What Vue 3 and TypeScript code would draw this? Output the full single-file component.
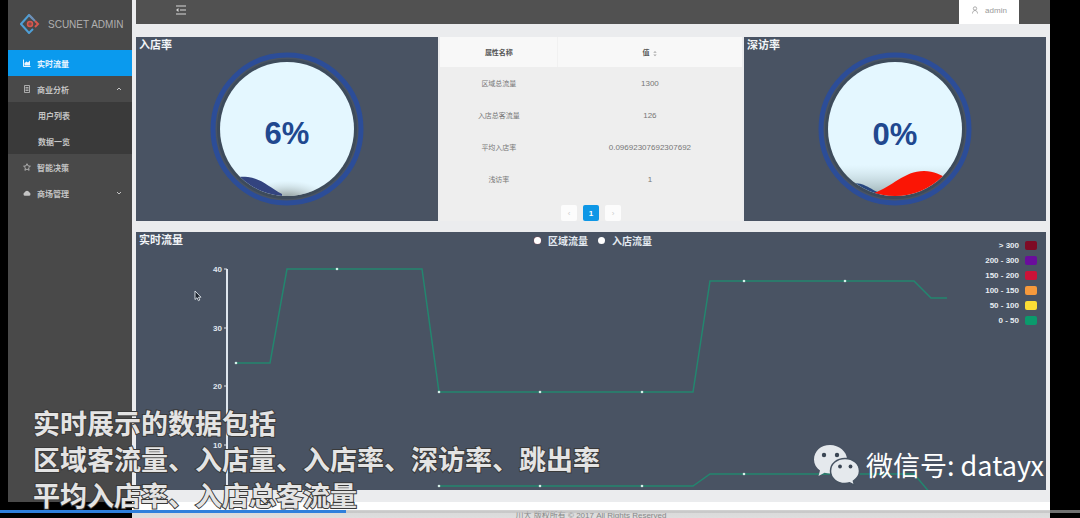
<script setup lang="ts">
import { computed, ref } from 'vue'

interface Point { x: number; y: number }
interface Row { name: string; value: string }

const rows: Row[] = [
  { name: '区域总流量', value: '1300' },
  { name: '入店总客流量', value: '126' },
  { name: '平均入店率', value: '0.09692307692307692' },
  { name: '浅访率', value: '1' },
]

const series = ref(['区域流量', '入店流量'])

const ranges = [
  { label: '> 300', color: '#7e0b25' },
  { label: '200 - 300', color: '#6a0d9c' },
  { label: '150 - 200', color: '#cc1238' },
  { label: '100 - 150', color: '#f6993c' },
  { label: '50 - 100', color: '#fbdd35' },
  { label: '0 - 50', color: '#0b9a6c' },
]

const ticks = [
  { label: '40', y: 37 },
  { label: '30', y: 96 },
  { label: '20', y: 154 },
  { label: '10', y: 213 },
]

const areaLine: Point[] = [
  { x: 100, y: 131 }, { x: 134, y: 131 }, { x: 151, y: 37 }, { x: 286, y: 37 },
  { x: 303, y: 160 }, { x: 557, y: 160 }, { x: 574, y: 49 }, { x: 778, y: 49 },
  { x: 795, y: 66 }, { x: 811, y: 66 },
]
const storeLine: Point[] = [
  { x: 303, y: 254 }, { x: 557, y: 254 }, { x: 574, y: 242 },
  { x: 778, y: 242 }, { x: 795, y: 262 },
]
const dots: Point[] = [
  { x: 100, y: 131 }, { x: 201, y: 37 }, { x: 303, y: 160 }, { x: 404, y: 160 },
  { x: 506, y: 160 }, { x: 608, y: 49 }, { x: 709, y: 49 },
  { x: 303, y: 254 }, { x: 404, y: 254 }, { x: 506, y: 254 }, { x: 608, y: 242 }, { x: 709, y: 242 },
]
const toPoints = (line: Point[]) => line.map((p) => `${p.x},${p.y}`).join(' ')
const areaPoints = computed(() => toPoints(areaLine))
const storePoints = computed(() => toPoints(storeLine))

const captions = [
  '实时展示的数据包括',
  '区域客流量、入店量、入店率、深访率、跳出率',
  '平均入店率、入店总客流量',
]
</script>

<template>
  <div class="screen">
    <div class="layout">
      <aside class="sidebar">
        <div class="brand">
          <svg class="brand-logo" viewBox="0 0 20 20" aria-hidden="true">
            <path d="M13 5 9 1 1 10l8 9 4-4" fill="none" stroke="#4f9fd6" stroke-width="2" />
            <path d="M9 1l6 6" fill="none" stroke="#6f8fb5" stroke-width="2" />
            <path d="M15 7l3 3-3 3" fill="none" stroke="#d8584f" stroke-width="2" />
            <circle cx="10" cy="10" r="2.5" fill="#8a4a48" stroke="#d8584f" stroke-width="1.500" />
          </svg>
          <span>SCUNET ADMIN</span>
        </div>
        <nav class="menu">
          <a class="item active" href="#live">
            <svg class="icon" viewBox="0 0 8 8"><path d="M.5.5v7h7" fill="none" stroke="currentColor" /><path d="M1.5 6.500V4l2-1.500 1.500 1 2-2v5z" fill="currentColor" /></svg>
            <span>实时流量</span>
          </a>
          <a class="item" href="#business">
            <svg class="icon" viewBox="0 0 8 8"><path d="M1.500.5h5v7h-5zM2.500 2.500h3M2.500 4h3M2.500 5.500h3" fill="none" stroke="currentColor" stroke-width=".8" /></svg>
            <span>商业分析</span>
            <svg class="arrow" viewBox="0 0 6 6"><path d="M1 4l2-2 2 2" fill="none" stroke="currentColor" /></svg>
          </a>
          <div class="submenu">
            <a class="item" href="#users">用户列表</a>
            <a class="item" href="#data">数据一览</a>
          </div>
          <a class="item" href="#decision">
            <svg class="icon" viewBox="0 0 8 8"><path d="M4 .7l1 2.200 2.400.3-1.800 1.600.5 2.500L4 6.100 1.900 7.300l.5-2.500L.6 3.200 3 2.900z" fill="none" stroke="currentColor" stroke-width=".8" /></svg>
            <span>智能决策</span>
          </a>
          <a class="item" href="#mall">
            <svg class="icon" viewBox="0 0 8 8"><path d="M2 6.800a1.800 1.800 0 0 1-.2-3.500 2.300 2.300 0 0 1 4.400 0A1.800 1.800 0 0 1 6 6.800z" fill="currentColor" /></svg>
            <span>商场管理</span>
            <svg class="arrow" viewBox="0 0 6 6"><path d="M1 2l2 2 2-2" fill="none" stroke="currentColor" /></svg>
          </a>
        </nav>
      </aside>

      <div class="main">
        <header class="topbar">
          <button class="fold" type="button" aria-label="收起菜单">
            <svg viewBox="0 0 10 10"><path d="M0 1h10M4 5h6M0 9h10" stroke="#d8d8d8" stroke-width="1.200" /><path d="M2.500 3v4L0 5z" fill="#d8d8d8" /></svg>
          </button>
          <button class="user" type="button">
            <svg viewBox="0 0 8 8"><circle cx="4" cy="2.500" r="1.700" fill="none" stroke="#999" stroke-width=".8" /><path d="M1.500 7.500c0-4 5-4 5 0" fill="none" stroke="#999" stroke-width=".8" /></svg>
            <span>admin</span>
          </button>
        </header>

        <main class="content">
          <section class="top-row">
            <article class="card">
              <h2>入店率</h2>
              <svg class="gauge" viewBox="0 0 302 184" role="img" aria-label="入店率 6%">
                <defs>
                  <clipPath id="disc-a"><circle cx="151" cy="92" r="67" /></clipPath>
                  <radialGradient id="shade-a" cx="151" cy="163" r="44" gradientUnits="userSpaceOnUse" gradientTransform="translate(0 90) scale(1 .45)">
                    <stop offset="0" stop-color="#75817f" /><stop offset=".4" stop-color="#9ca9a8" stop-opacity=".7" /><stop offset="1" stop-color="#c4d4d8" stop-opacity="0" />
                  </radialGradient>
                </defs>
                <circle cx="151" cy="92" r="70" fill="#3d4b5b" />
                <circle cx="151" cy="92" r="74" fill="none" stroke="#2c4d98" stroke-width="5" />
                <circle cx="151" cy="92" r="67" fill="#e4f7ff" />
                <g clip-path="url(#disc-a)">
                  <rect x="84" y="130" width="134" height="30" fill="url(#shade-a)" />
                  <path d="M84 143C96 140 104 139 112 140 126 142 134 151 146 157V160H84z" fill="#33447f" />
                </g>
                <text class="percent" x="151" y="107">6%</text>
              </svg>
            </article>

            <article class="table-box">
              <table>
                <thead>
                  <tr>
                    <th class="name">属性名称</th>
                    <th>值 <svg class="sort" viewBox="0 0 4 8"><path d="M0 3l2-2 2 2zM0 5l2 2 2-2z" fill="#aaa" /></svg></th>
                  </tr>
                </thead>
                <tbody>
                  <tr v-for="row in rows" :key="row.name">
                    <td class="name">{{ row.name }}</td>
                    <td>{{ row.value }}</td>
                  </tr>
                </tbody>
              </table>
              <nav class="pager" aria-label="分页">
                <button type="button" disabled aria-label="上一页">‹</button>
                <button type="button" class="current">1</button>
                <button type="button" disabled aria-label="下一页">›</button>
              </nav>
            </article>

            <article class="card">
              <h2>深访率</h2>
              <svg class="gauge" viewBox="0 0 302 184" role="img" aria-label="深访率 0%">
                <defs>
                  <clipPath id="disc-b"><circle cx="151" cy="92" r="67" /></clipPath>
                  <linearGradient id="shade-b" x1="0" y1="0" x2="0" y2="1">
                    <stop offset="0" stop-color="#b9cdd3" stop-opacity="0" /><stop offset="1" stop-color="#8fa4a6" stop-opacity=".9" />
                  </linearGradient>
                </defs>
                <circle cx="151" cy="92" r="70" fill="#3d4b5b" />
                <circle cx="151" cy="92" r="74" fill="none" stroke="#2c4d98" stroke-width="5" />
                <circle cx="151" cy="92" r="67" fill="#e4f7ff" />
                <g clip-path="url(#disc-b)">
                  <rect x="84" y="128" width="134" height="31" fill="url(#shade-b)" />
                  <path d="M84 150C100 145 116 145 122 149 127 151 130 154 136 156V160H84z" fill="#27477f" />
                  <path d="M130 156C148 150 160 134 180 134 190 134 197 138 204 142V160H130z" fill="#fb1505" />
                </g>
                <text class="percent" x="151" y="108">0%</text>
              </svg>
            </article>
          </section>

          <section class="card chart">
            <h2>实时流量</h2>
            <div class="series">
              <button v-for="(name, i) in series" :key="name" type="button">
                <i :class="{ warm: i === 0 }"></i>{{ name }}
              </button>
            </div>
            <ul class="ranges">
              <li v-for="range in ranges" :key="range.label">
                {{ range.label }}<i :style="{ background: range.color }"></i>
              </li>
            </ul>
            <svg class="plot" viewBox="0 0 910 258" role="img" aria-label="实时流量">
              <path d="M91 37V258" stroke="#dfe6ee" stroke-width="2" />
              <g v-for="tick in ticks" :key="tick.label">
                <path :d="`M88 ${tick.y}h3`" stroke="#dfe6ee" />
                <text class="tick" x="86" :y="tick.y + 3">{{ tick.label }}</text>
              </g>
              <polyline class="line" :points="areaPoints" />
              <polyline class="line" :points="storePoints" />
              <circle v-for="dot in dots" :key="`${dot.x}-${dot.y}`" :cx="dot.x" :cy="dot.y" r="1.300" fill="#d4efe8" />
            </svg>
          </section>
        </main>
        <footer class="footer">川大 版权所有 © 2017 All Rights Reserved</footer>
      </div>
    </div>

    <svg class="pointer" viewBox="0 0 8 12" aria-hidden="true"><path d="M1 1v8.500l2-1.800 1.400 3 1.400-.7-1.300-2.800h2.500z" fill="#1b222c" stroke="#dfe5ec" stroke-width=".9" /></svg>

    <div class="captions">
      <p v-for="caption in captions" :key="caption">{{ caption }}</p>
    </div>

    <div class="watermark">
      <svg viewBox="0 0 48 42" aria-hidden="true">
        <path d="M17 1C8 1 1 7 1 15.500c0 4.500 2.300 8.300 6 11L5.500 32l6-3.200c2 .6 3.800.7 5.500.7 9 0 17-6 17-14S26 1 17 1z" fill="#e5e9ed" />
        <path d="M32 14.500c-8 0-14.500 5.300-14.500 12.500S24 39.500 32 39.500c1.600 0 3.200-.3 4.700-.8l5 2.800-1.300-4.500c3.700-2.500 6.100-6 6.100-10 0-7.200-6.500-12.500-14.500-12.500z" fill="#e5e9ed" stroke="#465261" stroke-width="1.500" />
        <circle cx="11" cy="11" r="2.200" fill="#3b4654" /><circle cx="24" cy="11" r="2.200" fill="#3b4654" />
        <circle cx="27" cy="22.500" r="1.900" fill="#3b4654" /><circle cx="37.500" cy="22.500" r="1.900" fill="#3b4654" />
      </svg>
      <span>微信号: datayx</span>
    </div>

    <progress class="playback" value="32" max="100" aria-label="播放进度"></progress>
  </div>
</template>

<style>
body {
  margin: 0;
  background: #000;
}
</style>

<style scoped>
.screen {
  position: relative;
  min-height: 100vh;
  overflow: hidden;
  background: #000;
  font-family: "Liberation Sans", "Noto Sans CJK SC", sans-serif;
  font-size: 8px;
}
.layout {
  display: flex;
  align-items: stretch;
  padding: 0 30px 0 8px;
}
button {
  padding: 0;
  border: 0;
  background: none;
  font: inherit;
  color: inherit;
}
.sidebar {
  flex: 0 0 124px;
  margin-bottom: 16px;
  background: #494949;
  color: #c4c4c4;
}
.brand {
  display: flex;
  align-items: center;
  gap: 8px;
  height: 48px;
  margin-bottom: 2px;
  padding-left: 12px;
  box-sizing: border-box;
  font-size: 10px;
  color: #b0b0b0;
  white-space: nowrap;
}
.brand-logo {
  width: 20px;
  height: 20px;
}
.item {
  display: flex;
  align-items: center;
  gap: 6px;
  height: 26px;
  padding: 0 10px 0 15px;
  color: inherit;
  font-weight: 700;
  text-decoration: none;
}
.item.active {
  background: #0a9aee;
  color: #eaf6ff;
}
.icon {
  width: 8px;
  height: 8px;
}
.arrow {
  width: 6px;
  height: 6px;
  margin-left: auto;
}
.submenu {
  background: #3a3a3a;
}
.submenu .item {
  padding-left: 30px;
}
.main {
  flex: 1;
  min-width: 0;
  background: #ebecee;
}
.topbar {
  display: flex;
  justify-content: space-between;
  height: 24px;
  margin-left: 4px;
  padding: 0 31px 0 40px;
  background: #515151;
}
.fold svg {
  display: block;
  width: 10px;
  height: 10px;
}
.fold {
  margin-bottom: 4px;
}
.user {
  display: flex;
  align-items: center;
  justify-content: center;
  gap: 6px;
  width: 60px;
  padding-bottom: 4px;
  background: #fff;
  color: #999;
}
.user svg {
  width: 8px;
  height: 8px;
}
.content {
  display: flex;
  flex-direction: column;
  gap: 11px;
  padding: 13px 4px 12px;
}
.top-row {
  display: grid;
  grid-template-columns: repeat(3, 1fr);
  gap: 2px;
}
.card {
  position: relative;
  background: #495363;
}
.card h2 {
  position: absolute;
  top: 0;
  left: 3px;
  margin: 0;
  font-size: 11px;
  line-height: 16px;
  color: #f2f5f8;
}
.gauge,
.plot {
  display: block;
  width: 100%;
}
.percent {
  font-size: 31px;
  font-weight: 700;
  fill: #20488f;
  text-anchor: middle;
}
.table-box {
  background: #eee;
}
table {
  width: 100%;
  border-collapse: collapse;
  table-layout: fixed;
}
th,
td {
  height: 32px;
  padding: 0;
  text-align: center;
  color: #777;
}
th {
  height: 30px;
  background: #f8f8f8;
  color: #555;
  font-size: 7px;
}
.name {
  width: 39%;
  font-size: 7px;
}
th.name {
  box-shadow: inset -1px 0 #f1f1f1;
}
.sort {
  width: 4px;
  height: 7px;
  margin-left: 2px;
  vertical-align: middle;
}
.pager {
  display: flex;
  justify-content: center;
  gap: 6px;
  padding-top: 10px;
}
.pager button {
  width: 16px;
  height: 16px;
  border-radius: 2px;
  background: #fcfcfc;
  color: #ccc;
}
.pager .current {
  background: #0e97e6;
  color: #fff;
  font-weight: 700;
}
.series {
  position: absolute;
  top: 0;
  left: 0;
  right: 0;
  display: flex;
  justify-content: center;
  gap: 10px;
  padding-left: 4px;
}
.series button {
  display: flex;
  align-items: center;
  gap: 7px;
  height: 16px;
  font-size: 10px;
  font-weight: 700;
  color: #e3e9f0;
}
.series i {
  width: 7px;
  height: 7px;
  border-radius: 50%;
  background: #fff;
}
.series .warm {
  box-shadow: 0 0 1px #c8585c;
}
.ranges {
  position: absolute;
  top: 6px;
  right: 9px;
  margin: 0;
  padding: 0;
  list-style: none;
  font-weight: 700;
  color: #e8edf2;
}
.ranges li {
  display: flex;
  align-items: center;
  justify-content: flex-end;
  gap: 6px;
  height: 15px;
}
.ranges i {
  width: 12px;
  height: 9px;
  border-radius: 2px;
}
.tick {
  font-size: 8px;
  font-weight: 700;
  fill: #e0e7ef;
  text-anchor: end;
}
.line {
  fill: none;
  stroke: #23866f;
  stroke-width: 1.5;
}
.footer {
  height: 16px;
  overflow: hidden;
  background: linear-gradient(#fff 8px, #d9d9d9 9px, #dedede);
  color: #888;
  line-height: 28px;
  text-align: center;
}
.pointer {
  position: absolute;
  left: 194px;
  top: 290px;
  width: 8px;
  height: 12px;
}
.captions {
  position: absolute;
  left: 33px;
  bottom: 5px;
  font-family: "Noto Sans CJK SC", sans-serif;
  font-size: 27px;
  font-weight: 700;
  line-height: 36px;
  color: #e4e4e4;
  -webkit-text-stroke: 2px #3a3a3a;
  paint-order: stroke fill;
  white-space: nowrap;
}
.captions p {
  margin: 0;
}
.watermark {
  position: absolute;
  right: 36px;
  bottom: 32px;
  display: flex;
  align-items: center;
  gap: 5px;
  font-family: "Noto Sans CJK SC", sans-serif;
  font-size: 27px;
  line-height: 42px;
  color: #fff;
  white-space: nowrap;
}
.watermark svg {
  width: 48px;
  height: 42px;
}
.playback {
  position: absolute;
  left: 0;
  bottom: 5px;
  display: block;
  width: 100%;
  height: 3px;
  border: 0;
  appearance: none;
  background: rgba(190, 190, 190, 0.6);
}
.playback::-webkit-progress-bar {
  background: transparent;
}
.playback::-webkit-progress-value {
  background: #2f7fdc;
}
</style>
